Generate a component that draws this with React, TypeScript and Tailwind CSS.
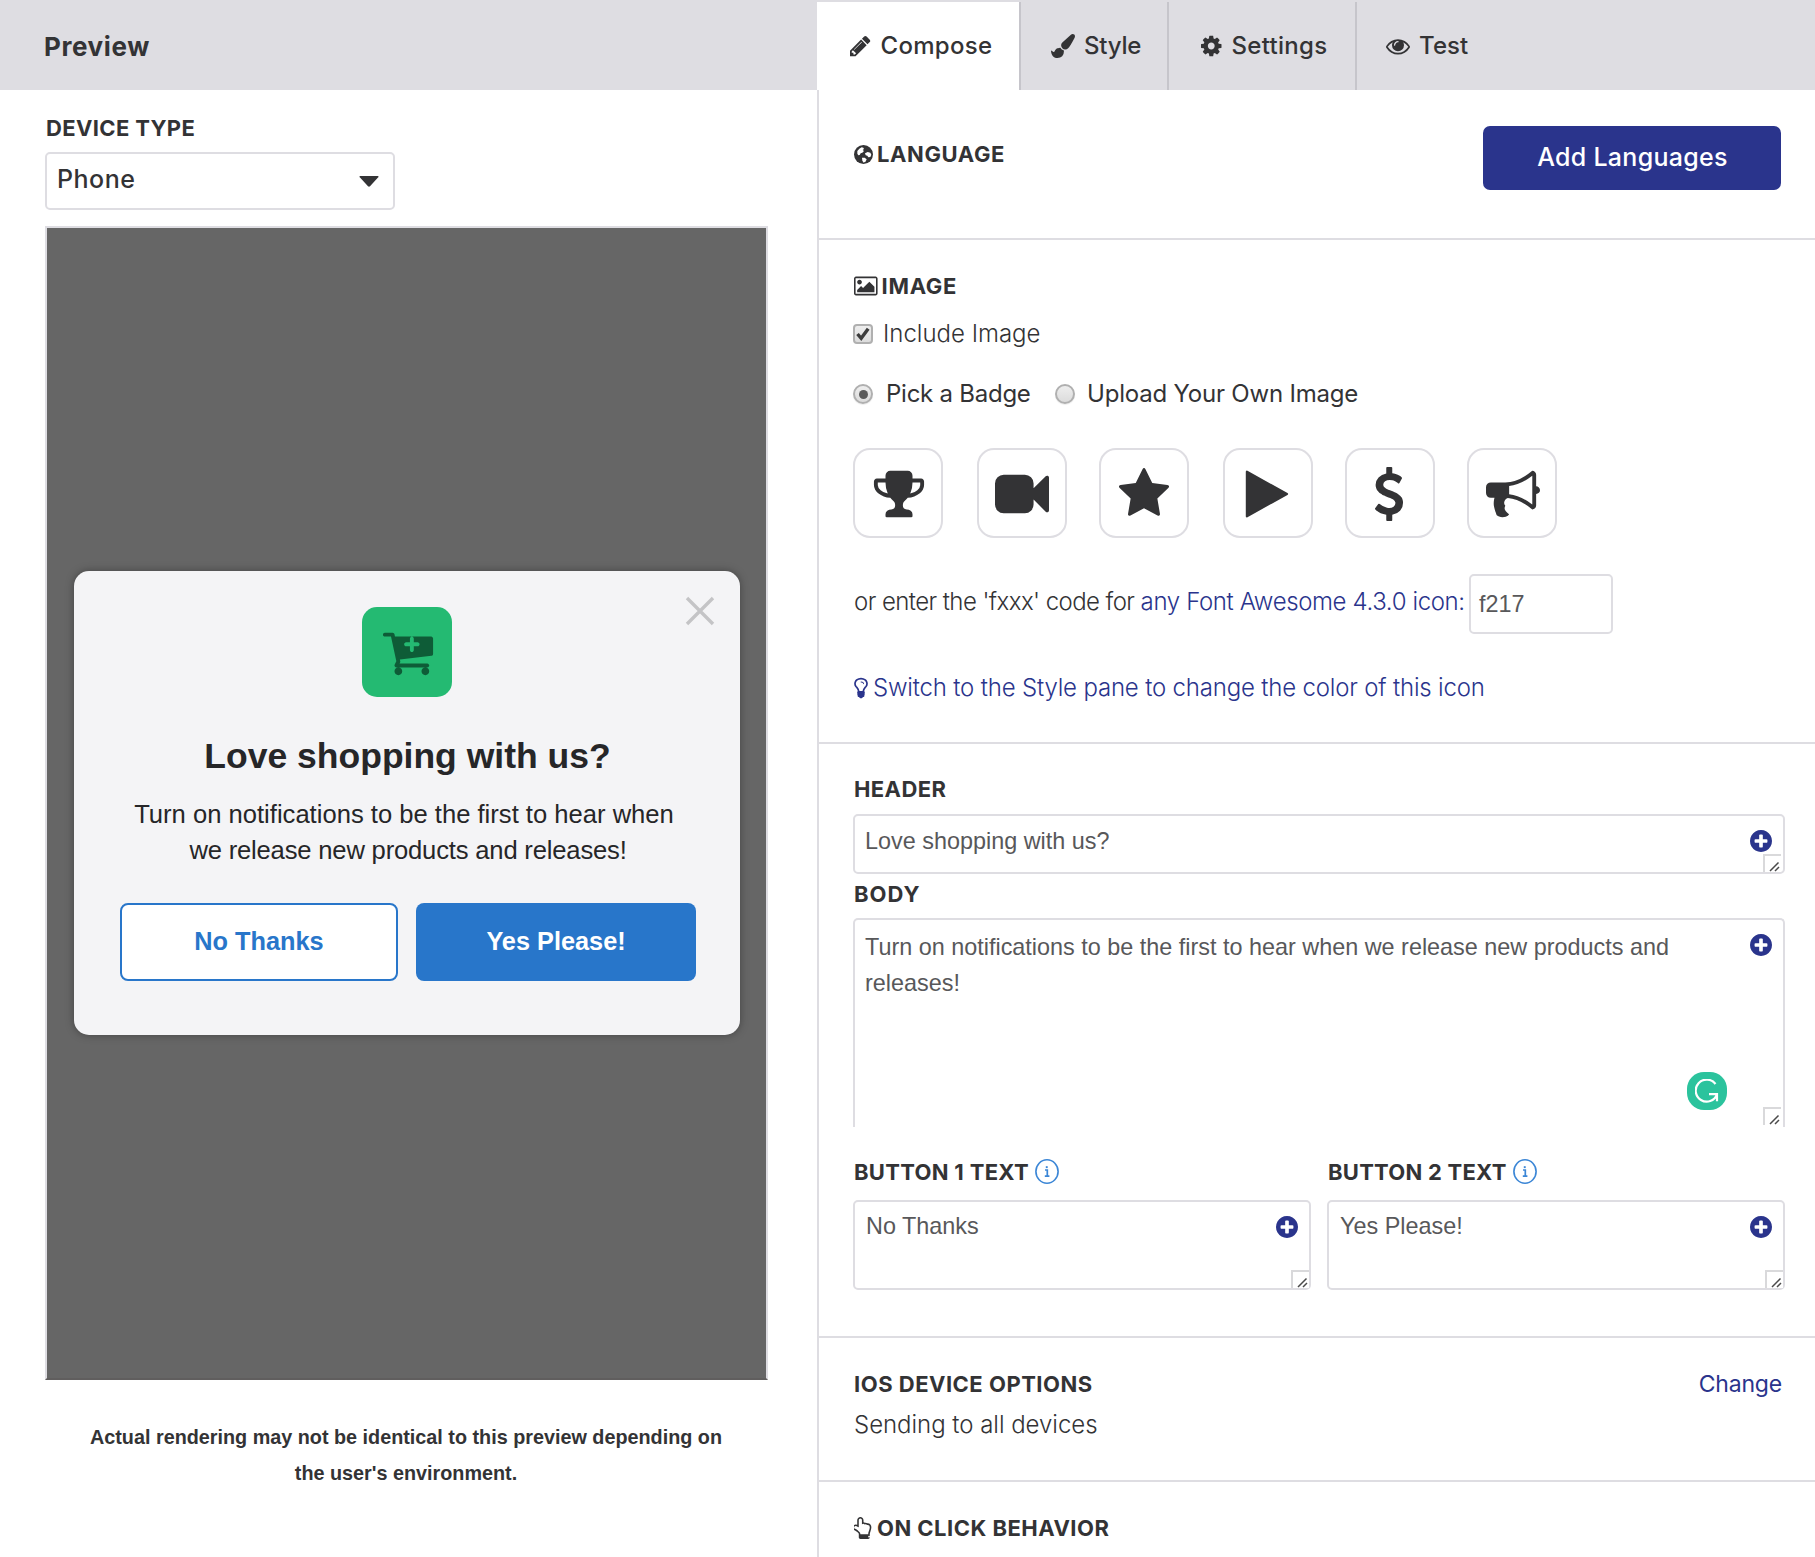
import React from "react";
import type { ReactNode } from "react";

const paths = {
  pencil:
    "M491 1536l91-91-235-235-91 91v107h128v128h107zm523-928q0-22-22-22-10 0-17 7l-542 542q-7 7-7 17 0 22 22 22 10 0 17-7l542-542q7-7 7-17zm-54-192l416 416-832 832h-416v-416zm683 96q0 53-37 90l-166 166-416-416 166-165q36-38 90-38 53 0 91 38l235 234q37 39 37 91z",
  brush:
    "M1615 0q70 0 122.5 46.5t52.5 116.5q0 63-45 151-332 629-465 752-97 91-218 91-126 0-216.5-92.5t-90.5-219.5q0-128 92-212l638-579q59-54 130-54zm-909 1034q39 76 106.5 130t150.5 76l1 71q4 213-129.5 347t-348.5 134q-123 0-218-46.5t-152.5-127.5-86.5-183-29-220q7 5 41 30t62 44.5 59 36.5 46 17q41 0 55-37 25-66 57.5-112.5t69.5-76 88-47.5 103-25.5 125-10.5z",
  cog: "M1152 896q0-106-75-181t-181-75-181 75-75 181 75 181 181 75 181-75 75-181zm512-109v222q0 12-8 23t-20 13l-185 28q-19 54-39 91 35 50 107 138 10 12 10 25t-9 23q-27 37-99 108t-94 71q-12 0-26-9l-138-108q-44 23-91 38-16 136-29 186-7 28-36 28h-222q-14 0-24.5-8.5t-11.5-21.5l-28-184q-49-16-90-37l-141 107q-10 9-25 9-14 0-25-11-126-114-165-168-7-10-7-23 0-12 8-23 15-21 51-66.5t54-70.5q-27-50-41-99l-183-27q-13-2-21-12.5t-8-23.5v-222q0-12 8-23t19-13l186-28q14-46 39-92-40-57-107-138-10-12-10-24 0-10 9-23 26-36 98.5-107.5t94.5-71.5q13 0 26 10l138 107q44-23 91-38 16-136 29-186 7-28 36-28h222q14 0 24.5 8.5t11.5 21.5l28 184q49 16 90 37l142-107q9-9 24-9 13 0 25 10 129 119 165 170 7 8 7 22 0 12-8 23-15 21-51 66.5t-54 70.5q26 50 41 98l183 28q13 2 21 12.5t8 23.5z",
  eye: "M1664 960q-152-236-381-353 61 104 61 225 0 185-131.5 316.5t-316.5 131.5-316.5-131.5-131.5-316.5q0-121 61-225-229 117-381 353 133 205 333.5 326.5t434.5 121.5 434.5-121.5 333.5-326.5zm-720-384q0-20-14-34t-34-14q-125 0-214.5 89.5t-89.5 214.5q0 20 14 34t34 14 34-14 14-34q0-86 61-147t147-61q20 0 34-14t14-34zm848 384q0 34-20 69-140 230-376.5 368.5t-499.5 138.5-499.5-139-376.5-368q-20-35-20-69t20-69q140-229 376.5-368t499.5-139 499.5 139 376.5 368q20 35 20 69z",
  picture:
    "M576 576q0 80-56 136t-136 56-136-56-56-136 56-136 136-56 136 56 56 136zm1024 384v448h-1408v-192l320-320 160 160 512-512zm96-704h-1600q-13 0-22.5 9.5t-9.5 22.5v1216q0 13 9.5 22.5t22.5 9.5h1600q13 0 22.5-9.5t9.5-22.5v-1216q0-13-9.5-22.5t-22.5-9.5zm160 32v1216q0 66-47 113t-113 47h-1600q-66 0-113-47t-47-113v-1216q0-66 47-113t113-47h1600q66 0 113 47t47 113z",
  trophy:
    "M522 883q-74-162-74-371h-256v96q0 78 94.5 162t235.5 113zm1078-275v-96h-256q0 209-74 371 141-29 235.5-113t94.5-162zm128-128v128q0 71-41.5 143t-112 130-173 97.5-215.5 44.5q-42 54-95 95-38 34-52.5 72.5t-14.5 89.5q0 54 30.5 91t97.5 37q75 0 133.5 45.5t58.5 114.5v64q0 14-9 23t-23 9h-832q-14 0-23-9t-9-23v-64q0-69 58.5-114.5t133.5-45.5q67 0 97.5-37t30.5-91q0-51-14.5-89.5t-52.5-72.5q-53-41-95-95-113-5-215.5-44.5t-173-97.5-112-130-41.5-143v-128q0-40 28-68t68-28h288v-96q0-66 47-113t113-47h576q66 0 113 47t47 113v96h288q40 0 68 28t28 68z",
  video:
    "M1792 352v1088q0 42-39 59-13 5-25 5-27 0-45-19l-403-403v166q0 119-84.5 203.5t-203.5 84.5h-704q-119 0-203.5-84.5t-84.5-203.5v-704q0-119 84.5-203.5t203.5-84.5h704q119 0 203.5 84.5t84.5 203.5v165l403-402q18-19 45-19 12 0 25 5 39 17 39 59z",
  star: "M1728 647q0 22-26 48l-363 354 86 500q1 7 1 20 0 21-10.5 35.5t-30.5 14.5q-19 0-40-12l-449-236-449 236q-22 12-40 12-21 0-31.5-14.5t-10.5-35.5q0-6 2-20l86-500-364-354q-25-27-25-48 0-37 56-46l502-73 225-455q19-41 49-41t49 41l225 455 502 73q56 9 56 46z",
  play: "M1576 927l-1328 738q-23 13-39.5 3t-16.5-36v-1472q0-26 16.5-36t39.5 3l1328 738q23 13 23 31t-23 31z",
  dollar:
    "M1362 1185q0 153-99.5 263.5t-258.5 136.5v175q0 14-9 23t-23 9h-135q-13 0-22.5-9.5t-9.5-22.5v-175q-66-9-127.5-31t-101.5-44.5-74-48-46.5-37.5-17.5-18q-17-21-2-41l103-135q7-10 23-12 15-2 24 9l2 2q113 99 243 125 37 8 74 8 81 0 142.5-43t61.5-122q0-28-15-53t-33.5-42-58.5-37.5-66-32-80-32.5q-39-16-61.5-25t-61.5-26.5-62.5-31-56.5-35.5-53.5-42.5-43.5-49-35.5-58-21-66.5-8.5-78q0-138 98-242t255-134v-180q0-13 9.5-22.5t22.5-9.5h135q14 0 23 9t9 23v176q57 6 110.5 23t87 33.5 63.5 37.5 39 29 15 14q17 18 5 38l-81 146q-8 15-23 16-14 3-27-7-3-3-14.5-12t-39-26.5-58.5-32-74.5-26-85.5-11.5q-95 0-155 43t-60 111q0 26 8.5 48t29.5 41.5 39.5 33 56 31 60.5 27 70 27.5q53 20 81 31.5t76 35 75.5 42.5 62 50 53 63.5 31.5 76.5 13 94z",
  bullhorn:
    "M1664 640q53 0 90.5 37.5t37.5 90.5-37.5 90.5-90.5 37.5v384q0 52-38 90t-90 38q-417-347-812-380-58 19-91 66t-31 100.5 40 92.5q-20 33-23 65.5t6 58 33.5 55 48 50 61.5 50.5q-29 58-111.5 83t-168.5 11.5-132-55.5q-7-23-29.5-87.5t-32-94.5-23-89-15-101 3.5-98.5 22-110.5h-122q-66 0-113-47t-47-113v-192q0-66 47-113t113-47h480q435 0 896-384 52 0 90 38t38 90v384zm-128 604v-954q-394 302-768 343v270q377 42 768 341z",
  bulb: "M1120 576q0 13-9.5 22.5t-22.5 9.5-22.5-9.5-9.5-22.5q0-46-54-71t-106-25q-13 0-22.5-9.5t-9.5-22.5 9.5-22.5 22.5-9.5q50 0 99.5 16t87 54 37.5 90zm160 0q0-72-34.5-134t-90-101.5-123-62-136.5-22.5-136.5 22.5-123 62-90 101.5-34.5 134q0 101 68 180 10 11 30.5 33t30.5 33q128 153 141 298h228q13-145 141-298 10-11 30.5-33t30.5-33q68-79 68-180zm128 0q0 155-103 268-45 49-74.5 87t-59.5 95.5-34 107.5q47 28 47 82 0 37-25 64 25 27 25 64 0 52-45 81 13 23 13 47 0 46-31.5 71t-77.5 25q-20 44-60 70t-87 26-87-26-60-70q-46 0-77.5-25t-31.5-71q0-24 13-47-45-29-45-81 0-37 25-64-25-27-25-64 0-54 47-82-4-50-34-107.5t-59.5-95.5-74.5-87q-103-113-103-268 0-99 44.5-184.5t117-142 164-89 186.5-32.5 186.5 32.5 164 89 117 142 44.5 184.5z",
  plus: "M1344 960v-128q0-26-19-45t-45-19h-256v-256q0-26-19-45t-45-19h-128q-26 0-45 19t-19 45v256h-256q-26 0-45 19t-19 45v128q0 26 19 45t45 19h256v256q0 26 19 45t45 19h128q26 0 45-19t19-45v-256h256q26 0 45-19t19-45zm320-64q0 209-103 385.5t-279.5 279.5-385.5 103-385.5-103-279.5-279.5-103-385.5 103-385.5 279.5-279.5 385.5-103 385.5 103 279.5 279.5 103 385.5z",
  hand: "M1408 1600q0-26-19-45t-45-19-45 19-19 45 19 45 45 19 45-19 19-45zm0-764q0-189-167-189-26 0-56 5-16-30-52.5-47.5t-73.5-17.5-69 18q-50-53-119-53-25 0-55.5 10t-47.5 25v-331q0-52-38-90t-90-38q-51 0-89.5 39t-38.5 89v576q-20 0-48.5-15t-55-33-68-33-84.5-15q-67 0-97.5 44.5t-30.5 115.5q0 24 139 90 44 24 65 37 64 40 145 112 81 71 106 101 57 69 57 140v32h640v-32q0-72 32-167t64-193.5 32-179.5zm128-5q0 133-69 322-59 164-59 223v288q0 53-37.5 90.5t-90.5 37.5h-640q-53 0-90.5-37.5t-37.5-90.5v-288q0-10-4.500-21.500t-14-23.500-18-22.500-22.500-24-21.500-20.500-21.500-19-17-14q-74-65-129-100-21-13-62-33t-72-37-63-40.500-49.500-55-17.500-69.500q0-125 67-206.500t189-81.500q68 0 128 22v-374q0-104 77-180t179-76q105 0 181 75.500t76 180.500v169q62 4 119 37 21-3 43-3 101 0 178 60 139-1 219.500 85t80.500 227z",
  cart: "M1280 640q0-26-19-45t-45-19h-128v-128q0-26-19-45t-45-19-45 19-19 45v128h-128q-26 0-45 19t-19 45 19 45 45 19h128v128q0 26 19 45t45 19 45-19 19-45v-128h128q26 0 45-19t19-45zm-576 896q0 53-37.5 90.5t-90.5 37.5-90.5-37.5-37.5-90.5 37.5-90.5 90.5-37.5 90.5 37.5 37.5 90.5zm896 0q0 53-37.5 90.5t-90.5 37.5-90.5-37.5-37.5-90.5 37.5-90.5 90.5-37.5 90.5 37.5 37.5 90.5zm128-1088v512q0 24-16 42.5t-41 21.5l-1044 122q1 7 4.5 21.5t6 26.5 2.5 22q0 16-24 64h920q26 0 45 19t19 45-19 45-45 19h-1024q-26 0-45-19t-19-45q0-14 11-39.5t29.5-59.5 20.5-38l-177-823h-204q-26 0-45-19t-19-45 19-45 45-19h256q16 0 28.5 6.5t20 15.5 13 24.5 7.5 26.5 5.5 29.5 4.5 25.5h1201q26 0 45 19t19 45z",
};

function Icon({ name, box = "0 0 1792 1792", className }: { name: keyof typeof paths; box?: string; className: string }) {
  return (
    <svg viewBox={box} className={`block shrink-0 ${className}`} fill="currentColor">
      <path d={paths[name]} />
    </svg>
  );
}

function Globe() {
  return (
    <svg viewBox="0 0 57 57" className="mt-px block size-[19px] shrink-0">
      <circle cx="28.5" cy="28.5" r="28.5" fill="#333335" />
      <path fill="#fff" d="M10 18l6-7 7-4 5 1 2 4-4 3 4 3-5 5-5 2-3 5-4 1-3-5z" />
      <path fill="#fff" d="M33 25l8-4 8 2 3 6-3 7-6 1-3-5-5-1z" />
      <path fill="#fff" d="M24 38l8 0 6 5-3 6-6 4-4-6z" />
    </svg>
  );
}

function Grip({ className }: { className: string }) {
  return (
    <span className={`absolute size-[18px] border-t-2 border-l-2 border-[#d9d9db] bg-white ${className}`}>
      <svg viewBox="0 0 16 16" className="block size-4" stroke="#4a4a4a" strokeWidth="1.5" fill="none">
        <path d="M5 15L13.500 6.500M10 15L14 11" />
      </svg>
    </span>
  );
}

function Field({
  className,
  grip = "right-0 bottom-0",
  children,
}: {
  className: string;
  grip?: string;
  children: ReactNode;
}) {
  return (
    <div
      className={`relative border-2 border-[#dedde2] bg-white font-['Liberation_Sans',sans-serif] text-[23.4px] leading-9 text-[#58585a] ${className}`}
    >
      {children}
      <Icon name="plus" box="128 128 1536 1536" className="absolute top-3.5 right-[11px] size-[22px] text-[#2a348c]" />
      <Grip className={grip} />
    </div>
  );
}

function Info() {
  return (
    <svg viewBox="0 0 24 25" className="mb-0.5 block h-[25px] w-6 shrink-0" fill="none" stroke="#3b86d6">
      <ellipse cx="12" cy="12.500" rx="11.100" ry="11.700" strokeWidth="1.600" />
      <path d="M10 11h2.300v6M9.800 17.200h4.600" strokeWidth="1.700" />
      <rect x="10.800" y="7.200" width="1.900" height="1.900" fill="#3b86d6" stroke="none" />
    </svg>
  );
}

function Radio({ on }: { on?: boolean }) {
  return (
    <span className="flex size-5 shrink-0 items-center justify-center rounded-full border-2 border-[#b0b0b0] bg-linear-to-b from-[#eeeeee] to-[#dcdcdc] shadow-[0_1px_1px_rgba(0,0,0,0.08)]">
      {on && <span className="size-[9px] rounded-full bg-[#5b5b5b]" />}
    </span>
  );
}

const label = "text-[22px] leading-6 font-bold";

function Badge({ name, className = "" }: { name: keyof typeof paths; className?: string }) {
  return (
    <div
      className={`flex size-[90px] items-center justify-center rounded-[17px] border-2 border-[#dedde2] pt-0.5 ${className}`}
    >
      <Icon name={name} className="size-[54px]" />
    </div>
  );
}

function PreviewPane() {
  return (
    <div className="flex w-[817px] shrink-0 flex-col">
      <div className="flex h-[90px] items-center bg-[#dedde2] pt-[3px] pl-11">
        <h1 className="text-[26px] font-bold tracking-[0.6px]">Preview</h1>
      </div>
      <div className="w-[768px] pt-[26px] pl-[45px]">
        <div className={`${label} pl-px tracking-[0.35px]`}>DEVICE TYPE</div>
        <div className="mt-3 flex h-[58px] w-[350px] items-center justify-between rounded-[5px] border-2 border-[#dedde2] pr-3.5 pb-0.5 pl-2.5">
          <span className="text-[25px] font-medium tracking-[0.5px]">Phone</span>
          <svg viewBox="0 0 20 11" className="mt-0.5 block h-[11px] w-5" fill="#333335">
            <path d="M1 0h18q1 0.500 0 1.500l-8 8.800q-1 0.800-2 0l-8-8.800q-1-1 0-1.500z" />
          </svg>
        </div>
        <div className="mt-4 h-[1154px] border-x-2 border-t-2 border-b-2 border-[#dedde2] border-b-[#605e5e] bg-[#666666] px-[27px] pt-[343px] font-['Liberation_Sans',sans-serif]">
          <div className="relative h-[464px] w-[666px] rounded-[15px] bg-[#f4f4f6] pt-9 text-center text-[#262628] shadow-[0_0_8px_rgba(0,0,0,0.35)]">
            <svg viewBox="0 0 30 30" className="absolute top-[25px] right-[25px] size-[30px]" stroke="#c4c4c6" strokeWidth="3.400">
              <path d="M2 2L28 28M28 2L2 28" />
            </svg>
            <div className="mx-auto flex size-[90px] items-center justify-center rounded-[15px] bg-[#24ba72] pl-px text-[#0e5c37]">
              <Icon name="cart" className="size-[54px]" />
            </div>
            <h2 className="mt-[37px] pl-px text-[35.5px] leading-[44px] font-bold">Love shopping with us?</h2>
            <p className="mt-[18px] text-[25.6px] leading-9">
              <span className="block pr-1.5">Turn on notifications to be the first to hear when</span>
              <span className="block pl-0.5 tracking-[-0.18px]">we release new products and releases!</span>
            </p>
            <div className="mt-[35px] flex gap-[18px] pl-[46px] text-[25.3px] font-bold">
              <div className="flex h-[78px] w-[278px] items-center justify-center rounded-lg border-2 border-[#2876ca] bg-white text-[#2876ca]">
                No Thanks
              </div>
              <div className="flex h-[78px] w-[280px] items-center justify-center rounded-lg bg-[#2876ca] text-white">
                Yes Please!
              </div>
            </div>
          </div>
        </div>
        <p className="mt-[39px] pr-px text-center font-['Liberation_Sans',sans-serif] text-[19.8px] leading-9 font-bold whitespace-nowrap">
          Actual rendering may not be identical to this preview depending on
          <br />
          the user's environment.
        </p>
      </div>
    </div>
  );
}

function Tabs() {
  const tab = "flex items-center border-[#c6c5cb] pb-px text-2xl font-medium";
  return (
    <div className="flex h-[90px] bg-[#dedde2] pt-0.5">
      <div className={`${tab} w-[204px] gap-2.5 border-r-2 bg-white pl-[33px]`}>
        <Icon name="pencil" box="128 0 1536 1792" className="h-6 w-[20.5px]" />
        <span className="tracking-[0.3px]">Compose</span>
      </div>
      <div className={`${tab} w-[148px] gap-[9px] border-r-2 pl-[30px]`}>
        <Icon name="brush" className="size-6" />
        <span className="tracking-[-0.2px]">Style</span>
      </div>
      <div className={`${tab} w-[188px] gap-2.5 border-r-2 pl-8`}>
        <Icon name="cog" box="128 0 1536 1792" className="h-6 w-[20.5px]" />
        <span className="tracking-[0.3px]">Settings</span>
      </div>
      <div className={`${tab} gap-[9px] pl-[29px]`}>
        <Icon name="eye" className="size-6" />
        <span className="tracking-[0.1px]">Test</span>
      </div>
    </div>
  );
}

export default function App() {
  return (
    <div className="flex h-[1557px] w-[1815px] overflow-hidden bg-white font-[Inter,sans-serif] text-[#333335]">
      <PreviewPane />
      <div className="flex min-w-0 flex-1 flex-col">
        <Tabs />
        <div className="flex-1 border-l-2 border-[#dedde2] text-2xl leading-7">
          <section className="flex h-[150px] items-start justify-between border-b-2 border-[#dedde2] pr-[34px] pl-[35px]">
            <div className="flex items-center gap-1 pt-[52px]">
              <Globe />
              <span className={`${label} tracking-[0.6px]`}>LANGUAGE</span>
            </div>
            <div className="mt-9 flex h-16 w-[298px] items-center justify-center rounded-[7px] bg-[#2a348c] pb-0.5 pl-px text-[25px] font-medium tracking-[0.3px] text-white">
              Add Languages
            </div>
          </section>

          <section className="h-[504px] border-b-2 border-[#dedde2] pt-[34px] pl-[34px]">
            <div className="flex items-center gap-1 pl-px">
              <Icon name="picture" box="-64 0 1920 1792" className="h-[22px] w-[23.6px]" />
              <span className={`${label} tracking-[0.7px]`}>IMAGE</span>
            </div>
            <div className="mt-[22px] flex items-center gap-2.5">
              <span className="flex size-5 items-center justify-center rounded-[4px] border-2 border-[#b0b0b0] bg-linear-to-b from-[#eeeeee] to-[#dcdcdc]">
                <svg viewBox="0 0 16 16" className="block size-4 shrink-0" fill="none" stroke="#3c3c3c" strokeWidth="3.400">
                  <path d="M2.500 8L6.200 12.300L13.200 2.800" />
                </svg>
              </span>
              <span className="font-light">Include Image</span>
            </div>
            <div className="mt-8 flex items-center">
              <Radio on />
              <span className="w-[182px] pl-[13px] tracking-[-0.25px]">Pick a Badge</span>
              <Radio />
              <span className="pl-3 tracking-[-0.2px]">Upload Your Own Image</span>
            </div>
            <div className="mt-10 flex">
              <Badge name="trophy" className="pl-0.5" />
              <Badge name="video" className="ml-[34px]" />
              <Badge name="star" className="ml-8" />
              <Badge name="play" className="ml-[34px] pr-0.5" />
              <Badge name="dollar" className="ml-8 pr-0.5" />
              <Badge name="bullhorn" className="ml-8 pl-0.5" />
            </div>
            <div className="mt-9 flex h-[60px] items-center font-light">
              <span className="w-[616px] pb-[5px] pl-px whitespace-nowrap tracking-[-0.57px]">
                or enter the 'fxxx' code for{" "}
                <span className="tracking-[-0.37px] text-[#2a348c]">any Font Awesome 4.3.0 icon:</span>
              </span>
              <span className="flex h-[60px] w-36 items-center rounded-[5px] border-2 border-[#dedde2] pl-2 font-['Liberation_Sans',sans-serif] text-[23.4px] font-normal text-[#58585a]">
                f217
              </span>
            </div>
            <div className="mt-10 flex items-center gap-[5px] pl-px font-light text-[#2a348c]">
              <Icon name="bulb" box="384 0 1024 1792" className="h-6 w-[14px]" />
              <span className="tracking-[-0.18px]">Switch to the Style pane to change the color of this icon</span>
            </div>
          </section>

          <section className="h-[594px] border-b-2 border-[#dedde2] pt-[33px] pl-[34px]">
            <div className={`${label} pl-px tracking-[0.4px]`}>HEADER</div>
            <Field className="mt-[13px] h-[60px] w-[932px] rounded-[5px] pt-[7px] pl-2.5" grip="right-0.5 bottom-0">
              Love shopping with us?
            </Field>
            <div className={`${label} mt-2 pl-px tracking-[1px]`}>BODY</div>
            <Field
              className="mt-3 h-[209px] w-[932px] rounded-t-[5px] border-b-0 pt-[9px] pr-[90px] pl-2.5"
              grip="right-0.5 bottom-0.5"
            >
              Turn on notifications to be the first to hear when we release new products and releases!
              <span className="absolute right-14 bottom-[17px] flex h-[38px] w-10 items-center justify-center rounded-[17px] bg-[#2bc39d]">
                <svg viewBox="0 0 24 24" className="block size-6" fill="none" stroke="#fff" strokeWidth="2.200">
                  <path d="M20.500 5A11 11 0 1 0 22 15.500M14 15.200h8v7" />
                </svg>
              </span>
            </Field>
            <div className="mt-8 flex gap-4">
              <div className="w-[458px]">
                <div className="flex h-[26px] items-center gap-1.5 pl-px">
                  <span className={`${label} tracking-[0.3px]`}>BUTTON 1 TEXT</span>
                  <Info />
                </div>
                <Field className="mt-[15px] h-[90px] rounded-[5px] pt-1.5 pl-[11px]">No Thanks</Field>
              </div>
              <div className="w-[458px]">
                <div className="flex h-[26px] items-center gap-1.5 pl-px">
                  <span className={`${label} tracking-[0.25px]`}>BUTTON 2 TEXT</span>
                  <Info />
                </div>
                <Field className="mt-[15px] h-[90px] rounded-[5px] pt-1.5 pl-[11px]">Yes Please!</Field>
              </div>
            </div>
          </section>

          <section className="h-36 border-b-2 border-[#dedde2] pt-[34px] pr-[33px] pl-[35px]">
            <div className="flex h-6 items-center justify-between">
              <span className={`${label} tracking-[0.5px]`}>IOS DEVICE OPTIONS</span>
              <span className="text-[23px] tracking-[-0.2px] text-[#2a348c]">Change</span>
            </div>
            <div className="mt-[15px] font-light tracking-[-0.03px]">Sending to all devices</div>
          </section>

          <section className="flex items-center gap-1 pt-[34px] pl-[35px]">
            <Icon name="hand" box="128 0 1536 1792" className="h-[22px] w-[19px]" />
            <span className={`${label} tracking-[0.48px]`}>ON CLICK BEHAVIOR</span>
          </section>
        </div>
      </div>
    </div>
  );
}
